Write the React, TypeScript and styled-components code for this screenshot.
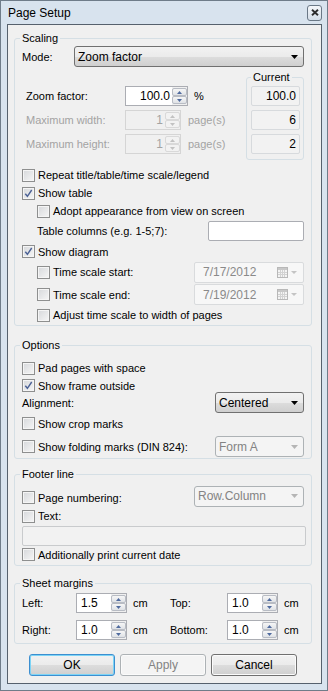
import React from "react";
import styled, { createGlobalStyle } from "styled-components";

const Global = createGlobalStyle`
  html, body { margin: 0; padding: 0; background: #ffffff; }
  body { font-family: "Liberation Sans", Arial, sans-serif; font-size: 11px; color: #000; }
  * { box-sizing: border-box; }
`;

const Window = styled.div`
  width: 328px;
  height: 691px;
  border: 1px solid #6f7c89;
  background: #d8e3ee;
  padding: 0 5px 6px 6px;
  display: flex;
  flex-direction: column;
`;

const TitleBar = styled.div`
  height: 23px;
  flex: none;
  display: flex;
  align-items: center;
  justify-content: space-between;
  padding-left: 1px;
`;

const Title = styled.span`
  font-size: 12px;
  color: #000;
`;

const CloseBtn = styled.div`
  width: 15px;
  height: 16px;
  border: 1px solid #6a7886;
  border-radius: 3px;
  background: linear-gradient(#f4f7fa, #d5dee8);
  display: flex;
  align-items: center;
  justify-content: center;
`;

const Content = styled.div`
  flex: 1;
  background: #f0f0f0;
  border: 1px solid #56616d;
  padding: 0 9px 0 6px;
  display: flex;
  flex-direction: column;
`;

const Group = styled.fieldset<{ $mt: number; $pt?: number; $pb?: number }>`
  margin: ${(p) => p.$mt}px 0 0 0;
  padding: ${(p) => p.$pt ?? 0}px 7px ${(p) => p.$pb ?? 0}px 7px;
  border: 1px solid #d5dfe5;
  border-radius: 3px;
  min-width: 0;
  display: flex;
  flex-direction: column;
`;

const Legend = styled.legend<{ $ml?: number }>`
  padding: 0 2px;
  margin-left: ${(p) => p.$ml ?? -2}px;
  height: 14px;
  line-height: 14px;
  font-size: 11px;
`;

const Row = styled.div<{ $h: number; $mt?: number; $indent?: number }>`
  height: ${(p) => p.$h}px;
  margin-top: ${(p) => p.$mt ?? 0}px;
  padding-left: ${(p) => p.$indent ?? 0}px;
  display: flex;
  align-items: center;
  justify-content: space-between;
  flex: none;
`;

const Label = styled.span<{ $w?: number; $disabled?: boolean }>`
  width: ${(p) => (p.$w ? `${p.$w}px` : "auto")};
  flex: none;
  color: ${(p) => (p.$disabled ? "#a3a3a3" : "#000")};
  white-space: nowrap;
`;

const Unit = styled.span<{ $disabled?: boolean; $ml: number }>`
  margin-left: ${(p) => p.$ml}px;
  color: ${(p) => (p.$disabled ? "#a3a3a3" : "#000")};
`;

const CheckLabel = styled.label<{ $indent?: number; $dy?: number }>`
  display: inline-flex;
  align-items: center;
  gap: 3px;
  margin-left: ${(p) => p.$indent ?? 0}px;
  margin-top: ${(p) => p.$dy ?? 0}px;
  white-space: nowrap;
`;

const Box = styled.span`
  width: 13px;
  height: 13px;
  flex: none;
  border: 1px solid #8e8f8f;
  background: linear-gradient(135deg, #d6d8db 0%, #f6f6f6 100%);
  box-shadow: inset 0 0 0 1px #f5f5f5;
  display: flex;
  align-items: center;
  justify-content: center;
`;

const Combo = styled.div<{ $w?: number; $disabled?: boolean }>`
  height: 21px;
  width: ${(p) => (p.$w ? `${p.$w}px` : "auto")};
  flex: ${(p) => (p.$w ? "none" : "1")};
  border: 1px solid ${(p) => (p.$disabled ? "#adb2b5" : "#707070")};
  border-radius: 3px;
  background: ${(p) =>
    p.$disabled
      ? "#f4f4f4"
      : "linear-gradient(#f2f2f2 0%, #ebebeb 50%, #dddddd 50%, #cfcfcf 100%)"};
  color: ${(p) => (p.$disabled ? "#838383" : "#000")};
  display: flex;
  align-items: center;
  justify-content: space-between;
  padding: 0 5px 0 3px;
  font-size: 12px;
`;

const Spin = styled.div<{ $w: number; $disabled?: boolean }>`
  width: ${(p) => p.$w}px;
  height: 20px;
  flex: none;
  display: flex;
  border: 1px solid ${(p) => (p.$disabled ? "#d5d5d5" : "#abadb3")};
  background: ${(p) => (p.$disabled ? "#f0f0f0" : "#ffffff")};
`;

const SpinText = styled.span<{ $disabled?: boolean; $align: "left" | "right" }>`
  flex: 1;
  line-height: 18px;
  text-align: ${(p) => p.$align};
  padding: 0 2px 0 4px;
  color: ${(p) => (p.$disabled ? "#a3a3a3" : "#000")};
  font-size: 12px;
`;

const SpinBtns = styled.div`
  width: 15px;
  flex: none;
  display: flex;
  flex-direction: column;
  padding: 1px 0 1px 0;
  background: #f0f0f0;
`;

const SpinBtn = styled.div<{ $disabled?: boolean }>`
  flex: 1;
  border: 1px solid ${(p) => (p.$disabled ? "#d9d9d9" : "#b8bcc4")};
  border-radius: 2px;
  background: ${(p) =>
    p.$disabled ? "#f2f2f2" : "linear-gradient(#f6f6f6, #dfe2e6)"};
  display: flex;
  align-items: center;
  justify-content: center;
`;

const CurrentField = styled.div`
  height: 20px;
  border: 1px solid #d7dadd;
  border-radius: 2px;
  background: #f2f2f2;
  text-align: right;
  line-height: 18px;
  padding-right: 3px;
  font-size: 12px;
`;

const TextInput = styled.div<{ $w?: number; $disabled?: boolean; $mr?: number; $grow?: boolean }>`
  height: 20px;
  width: ${(p) => (p.$w ? `${p.$w}px` : "auto")};
  flex: ${(p) => (p.$grow ? "1" : "none")};
  margin-right: ${(p) => p.$mr ?? 0}px;
  border: 1px solid ${(p) => (p.$disabled ? "#c9cbcd" : "#abadb3")};
  border-radius: 2px;
  background: ${(p) => (p.$disabled ? "#f2f2f2" : "#ffffff")};
`;

const DateField = styled.div`
  width: 110px;
  height: 21px;
  flex: none;
  border: 1px solid #d9dbdd;
  border-radius: 2px;
  background: #f7f7f7;
  color: #8a8a8a;
  display: flex;
  align-items: center;
  justify-content: space-between;
  padding: 0 6px 0 8px;
  font-size: 12px;
`;

const DateIcons = styled.span`
  display: flex;
  align-items: center;
  gap: 3px;
`;

const ZoomSection = styled.div`
  display: flex;
  align-items: flex-start;
  margin-top: 3px;
`;

const LeftCol = styled.div`
  display: flex;
  flex-direction: column;
  gap: 4px;
  padding: 16px 0 0 4px;
`;

const SubRow = styled.div`
  height: 20px;
  display: flex;
  align-items: center;
`;

const CurrentGroup = styled.fieldset`
  margin: 0 0 0 auto;
  width: 58px;
  padding: 2px 3px 5px 4px;
  border: 1px solid #d5dfe5;
  border-radius: 3px;
  min-width: 0;
  display: flex;
  flex-direction: column;
  gap: 4px;
`;

const MarginGrid = styled.div`
  display: grid;
  grid-template-columns: 54px 51px 43px 57px 51px auto;
  grid-auto-rows: 20px;
  row-gap: 7px;
  align-items: center;
`;

const CmText = styled.span`
  padding-left: 6px;
`;

const ButtonRow = styled.div`
  margin-top: 10px;
  display: flex;
  justify-content: center;
  gap: 5px;
`;

const Btn = styled.button<{ $kind: "default" | "normal" | "disabled" }>`
  width: 86px;
  height: 22px;
  font-family: inherit;
  font-size: 12px;
  padding: 0;
  border-radius: 3px;
  border: 1px solid
    ${(p) => (p.$kind === "default" ? "#3c8fd0" : p.$kind === "disabled" ? "#adb2b5" : "#707070")};
  box-shadow: ${(p) => (p.$kind === "default" ? "inset 0 0 0 1px #7dd4f6" : "inset 0 0 0 1px #fbfbfb")};
  background: ${(p) =>
    p.$kind === "disabled"
      ? "#f4f4f4"
      : "linear-gradient(#f2f2f2 0%, #ebebeb 50%, #dddddd 50%, #cfcfcf 100%)"};
  color: ${(p) => (p.$kind === "disabled" ? "#838383" : "#000")};
`;

const Tri = ({ dir, color, w, h }: { dir: "up" | "down"; color: string; w: number; h: number }) => (
  <svg width={w} height={h} viewBox={`0 0 ${w} ${h}`}>
    <path d={dir === "up" ? `M0 ${h} L${w / 2} 0 L${w} ${h} Z` : `M0 0 L${w} 0 L${w / 2} ${h} Z`} fill={color} />
  </svg>
);

const Check = ({ checked }: { checked?: boolean }) => (
  <Box>
    {checked && (
      <svg width="11" height="11" viewBox="0 0 11 11">
        <path d="M2.3 5.7 L4.4 8.3 L8.7 2" fill="none" stroke="#4c6296" strokeWidth="1.4" />
      </svg>
    )}
  </Box>
);

const CheckItem = ({
  text,
  checked,
  indent,
  dy,
}: {
  text: string;
  checked?: boolean;
  indent?: number;
  dy?: number;
}) => (
  <CheckLabel $indent={indent} $dy={dy}>
    <Check checked={checked} />
    <span>{text}</span>
  </CheckLabel>
);

const SpinBox = ({
  value,
  w,
  disabled,
  align = "right",
}: {
  value: string;
  w: number;
  disabled?: boolean;
  align?: "left" | "right";
}) => {
  const c = disabled ? "#c2c2c2" : "#4f6a9e";
  return (
    <Spin $w={w} $disabled={disabled}>
      <SpinText $disabled={disabled} $align={align}>
        {value}
      </SpinText>
      <SpinBtns>
        <SpinBtn $disabled={disabled}>
          <Tri dir="up" color={c} w={5} h={3} />
        </SpinBtn>
        <SpinBtn $disabled={disabled}>
          <Tri dir="down" color={c} w={5} h={3} />
        </SpinBtn>
      </SpinBtns>
    </Spin>
  );
};

const ComboBox = ({ value, w, disabled }: { value: string; w?: number; disabled?: boolean }) => (
  <Combo $w={w} $disabled={disabled}>
    <span>{value}</span>
    <Tri dir="down" color={disabled ? "#b5b5b5" : "#000"} w={7} h={4} />
  </Combo>
);

const CalendarIcon = () => (
  <svg width="11" height="11" viewBox="0 0 11 11">
    <rect x="0.5" y="0.5" width="10" height="10" fill="#f4f4f4" stroke="#b8b8b8" />
    <rect x="1" y="1" width="9" height="2" fill="#c8c8c8" />
    <path d="M1 5.5 H10 M1 7.5 H10 M3.5 3 V10 M5.5 3 V10 M7.5 3 V10" stroke="#d2d2d2" strokeWidth="1" />
  </svg>
);

const DateBox = ({ value }: { value: string }) => (
  <DateField>
    <span>{value}</span>
    <DateIcons>
      <CalendarIcon />
      <Tri dir="down" color="#c4c4c4" w={6} h={3} />
    </DateIcons>
  </DateField>
);

export default function App() {
  return (
    <>
      <Global />
      <Window>
        <TitleBar>
          <Title>Page Setup</Title>
          <CloseBtn>
            <svg width="8" height="7" viewBox="0 0 8 7">
              <path d="M1 0.8 L7 6.2 M7 0.8 L1 6.2" stroke="#2d2d2d" strokeWidth="1.9" />
            </svg>
          </CloseBtn>
        </TitleBar>
        <Content>
          <Group $mt={6} $pb={1}>
            <Legend>Scaling</Legend>
            <Row $h={21} $mt={1}>
              <Label $w={52}>Mode:</Label>
              <ComboBox value="Zoom factor" />
            </Row>
            <ZoomSection>
              <LeftCol>
                <SubRow>
                  <Label $w={99}>Zoom factor:</Label>
                  <SpinBox value="100.0" w={63} />
                  <Unit $ml={6}>%</Unit>
                </SubRow>
                <SubRow>
                  <Label $w={99} $disabled>
                    Maximum width:
                  </Label>
                  <SpinBox value="1" w={56} disabled />
                  <Unit $ml={7} $disabled>
                    page(s)
                  </Unit>
                </SubRow>
                <SubRow>
                  <Label $w={99} $disabled>
                    Maximum height:
                  </Label>
                  <SpinBox value="1" w={56} disabled />
                  <Unit $ml={7} $disabled>
                    page(s)
                  </Unit>
                </SubRow>
              </LeftCol>
              <CurrentGroup>
                <Legend $ml={0}>Current</Legend>
                <CurrentField>100.0</CurrentField>
                <CurrentField>6</CurrentField>
                <CurrentField>2</CurrentField>
              </CurrentGroup>
            </ZoomSection>
            <Row $h={18} $mt={6}>
              <CheckItem text="Repeat title/table/time scale/legend" />
            </Row>
            <Row $h={18}>
              <CheckItem text="Show table" checked />
            </Row>
            <Row $h={18}>
              <CheckItem text="Adopt appearance from view on screen" indent={15} />
            </Row>
            <Row $h={22} $indent={15}>
              <Label>Table columns (e.g. 1-5;7):</Label>
              <TextInput $w={96} />
            </Row>
            <Row $h={19}>
              <CheckItem text="Show diagram" checked />
            </Row>
            <Row $h={22}>
              <CheckItem text="Time scale start:" indent={15} />
              <DateBox value="7/17/2012" />
            </Row>
            <Row $h={23}>
              <CheckItem text="Time scale end:" indent={15} />
              <DateBox value="7/19/2012" />
            </Row>
            <Row $h={18}>
              <CheckItem text="Adjust time scale to width of pages" indent={15} />
            </Row>
          </Group>

          <Group $mt={12} $pt={7} $pb={1}>
            <Legend>Options</Legend>
            <Row $h={18}>
              <CheckItem text="Pad pages with space" />
            </Row>
            <Row $h={17}>
              <CheckItem text="Show frame outside" checked />
            </Row>
            <Row $h={17}>
              <Label>Alignment:</Label>
              <ComboBox value="Centered" w={89} />
            </Row>
            <Row $h={25}>
              <CheckItem text="Show crop marks" />
            </Row>
            <Row $h={21}>
              <CheckItem text="Show folding marks (DIN 824):" />
              <ComboBox value="Form A" w={89} disabled />
            </Row>
          </Group>

          <Group $mt={8} $pt={4} $pb={1}>
            <Legend>Footer line</Legend>
            <Row $h={22}>
              <CheckItem text="Page numbering:" dy={3} />
              <ComboBox value="Row.Column" w={110} disabled />
            </Row>
            <Row $h={18}>
              <CheckItem text="Text:" />
            </Row>
            <Row $h={19} $mt={1}>
              <TextInput $disabled $grow $mr={-2} />
            </Row>
            <Row $h={19}>
              <CheckItem text="Additionally print current date" />
            </Row>
          </Group>

          <Group $mt={10} $pt={3} $pb={3}>
            <Legend>Sheet margins</Legend>
            <MarginGrid>
              <Label>Left:</Label>
              <SpinBox value="1.5" w={51} align="left" />
              <CmText>cm</CmText>
              <Label>Top:</Label>
              <SpinBox value="1.0" w={51} align="left" />
              <CmText>cm</CmText>
              <Label>Right:</Label>
              <SpinBox value="1.0" w={51} align="left" />
              <CmText>cm</CmText>
              <Label>Bottom:</Label>
              <SpinBox value="1.0" w={51} align="left" />
              <CmText>cm</CmText>
            </MarginGrid>
          </Group>

          <ButtonRow>
            <Btn $kind="default">OK</Btn>
            <Btn $kind="disabled">Apply</Btn>
            <Btn $kind="normal">Cancel</Btn>
          </ButtonRow>
        </Content>
      </Window>
    </>
  );
}
